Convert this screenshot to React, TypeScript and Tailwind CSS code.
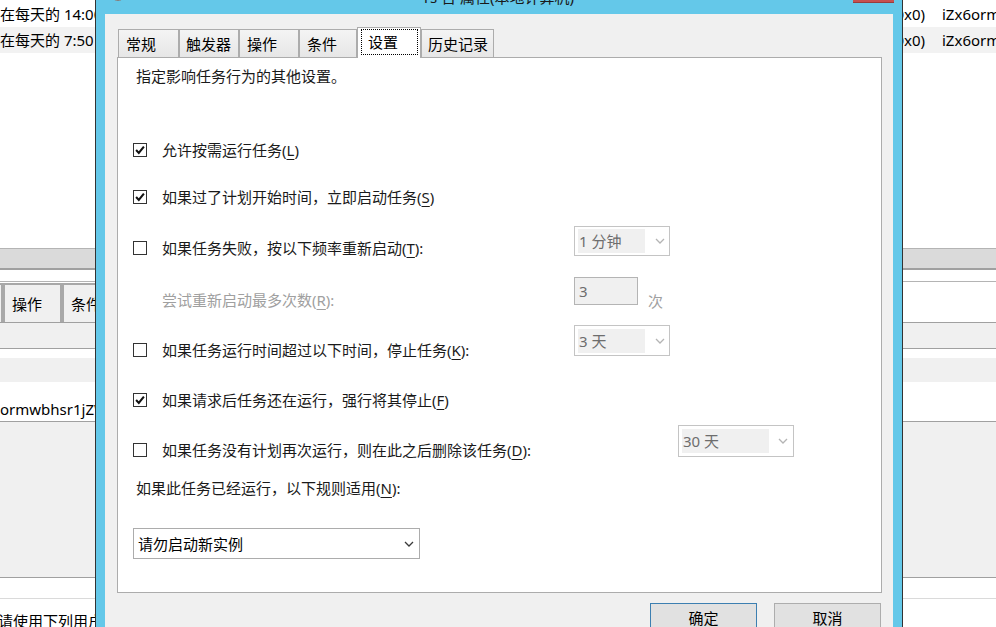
import React from "react";

const FONT = "font-['Noto_Sans','Noto_Sans_CJK_SC',sans-serif]";

function Chevron({ color }: { color: string }) {
  return (
    <svg width="10" height="6" viewBox="0 0 10 6" className="shrink-0">
      <path d="M1 1 L5 5 L9 1" fill="none" stroke={color} strokeWidth="1.3" />
    </svg>
  );
}

function Box({ checked }: { checked?: boolean }) {
  return (
    <span className="w-[14px] h-[14px] shrink-0 border border-[#333333] bg-white flex items-center justify-center">
      {checked && (
        <svg width="12" height="12" viewBox="0 0 12 12">
          <path d="M2.1 6.1 L4.8 8.9 L9.9 2.7" fill="none" stroke="#111" strokeWidth="2.1" />
        </svg>
      )}
    </span>
  );
}

function U({ k }: { k: string }) {
  return <span className="underline underline-offset-[3px] decoration-1">{k}</span>;
}

function CheckLine({ checked, children }: { checked?: boolean; children: React.ReactNode }) {
  return (
    <div className="flex items-center h-[20px]">
      <Box checked={checked} />
      <span className="ml-[15px] whitespace-nowrap text-[#1a1a1a]">{children}</span>
    </div>
  );
}

function DisabledCombo({
  text,
  outer,
  inner,
  gap,
}: {
  text: string;
  outer: string;
  inner: string;
  gap: string;
}) {
  return (
    <div className={`${outer} shrink-0 border border-[#c4c4c4] bg-white flex items-center pl-[3px]`}>
      <div className={`${inner} h-[24px] bg-[#f0f0f0] flex items-center pl-[1px] text-[#6d6d6d] whitespace-nowrap`}>
        {text}
      </div>
      <div className={gap}>
        <Chevron color="#b4b4b4" />
      </div>
    </div>
  );
}

function BackTab({ label, cls }: { label: string; cls: string }) {
  return (
    <div className={`${cls} h-[39px] shrink-0 border-2 border-b-0 border-[#a8a8a8] bg-[#f0f0f0] flex items-center pl-[7px] whitespace-nowrap`}>
      {label}
    </div>
  );
}

function Background() {
  return (
    <div className="w-[996px] flex flex-col bg-white text-[15px] leading-[20px] text-black">
      <div className="mt-[1px] h-[26px] shrink-0 flex items-center whitespace-nowrap">
        <span className="w-[880px] shrink-0">在每天的 14:00 时 - 触发后，无限期地每隔 1 小时重复一次</span>
        <span className="w-[45px] shrink-0 text-right">(0x0)</span>
        <span className="ml-[17px]">iZx6ormwbhsr1jZ</span>
      </div>
      <div className="h-[26px] shrink-0 flex items-center whitespace-nowrap bg-[#f2f2f2]">
        <span className="w-[880px] shrink-0">在每天的 7:50 时</span>
        <span className="w-[45px] shrink-0 text-right">(0x0)</span>
        <span className="ml-[17px]">iZx6ormwbhsr1jZ</span>
      </div>
      <div className="h-[195px] shrink-0" />
      <div className="h-[22px] shrink-0 border-t border-[#b4b4b4] border-b-2 border-b-[#a0a0a0] bg-[#dadada]" />
      <div className="h-[11px] shrink-0" />
      <div className="h-[41px] shrink-0 border-t border-[#b4b4b4] flex items-end bg-white">
        <div className="w-[3px] h-[39px] shrink-0 border-r-2 border-t-2 border-[#a8a8a8] bg-[#f0f0f0]" />
        <BackTab label="操作" cls="w-[59px]" />
        <BackTab label="条件" cls="w-[80px]" />
      </div>
      <div className="h-[27px] shrink-0 border-t border-b border-[#a0a0a0] bg-[#f0f0f0]" />
      <div className="h-[9px] shrink-0" />
      <div className="h-[24px] shrink-0 bg-[#f0f0f0]" />
      <div className="h-[39px] shrink-0 pt-[17px] whitespace-nowrap">ormwbhsr1jZWXYZ</div>
      <div className="h-[157px] shrink-0 border-t border-b border-[#a0a0a0] bg-[#f0f0f0]" />
      <div className="h-[21px] shrink-0 border-b border-[#dadada]" />
      <div className="shrink-0 pt-[12px] -ml-[2px] whitespace-nowrap">请使用下列用户帐户运行此任务</div>
    </div>
  );
}

function Tab({ label, cls, active }: { label: string; cls: string; active?: boolean }) {
  if (active) {
    return (
      <div className={`${cls} relative z-10 -mb-px h-[31px] border border-b-0 border-[#acacac] bg-white flex items-start pt-[1px] pl-[3px]`}>
        <span className="h-[26px] w-[57px] border border-dotted border-black flex items-center pl-[6px]">{label}</span>
      </div>
    );
  }
  return (
    <div
      className={`${cls} h-[28px] border border-b-0 border-[#acacac] bg-linear-to-b from-[#f4f4f4] to-[#e6e6e6] flex items-center whitespace-nowrap`}
    >
      {label}
    </div>
  );
}

function Dialog() {
  return (
    <div className="absolute left-[95px] top-[-30px] w-[808px] h-[700px] border border-[#333333] bg-[#64c8e9] px-[9px] flex flex-col">
      {/* caption */}
      <div className="relative h-[43px] shrink-0">
        <span className="absolute left-[5px] top-[14px] w-[16px] h-[16px] rounded-full border-[1.5px] border-[#7a7a7a] bg-[#e8e8e8]" />
        <div className="pt-[16px] text-center leading-[20px] text-[15px] text-[#1a1a1a] whitespace-nowrap">
          rs 台 属性(本地计算机)
        </div>
        <span className="absolute left-[748px] top-[10px] w-[41px] h-[22px] bg-[#c75050] border-b border-[#9a3c3c]" />
      </div>

      {/* body */}
      <div className="flex-1 bg-[#f0f0f0] pt-[13px] pl-[12px] pr-[11px] flex flex-col text-[15px] leading-[20px] text-black">
        <div className="h-[30px] flex items-end pl-[1px]">
          <Tab label="常规" cls="w-[61px] pl-[7px]" />
          <Tab label="触发器" cls="w-[60px] pl-[6px]" />
          <Tab label="操作" cls="w-[60px] pl-[7px]" />
          <Tab label="条件" cls="w-[58px] pl-[7px]" />
          <Tab label="设置" cls="w-[64px]" active />
          <Tab label="历史记录" cls="w-[73px] pl-[6px]" />
        </div>

        <div className="h-[536px] w-[765px] shrink-0 border border-[#acacac] bg-white pl-[15px] flex flex-col">
          <div className="mt-[8px] h-[20px] ml-[3px] whitespace-nowrap text-[#1a1a1a]">指定影响任务行为的其他设置。</div>

          <div className="mt-[54px]">
            <CheckLine checked>
              允许按需运行任务(<U k="L" />)
            </CheckLine>
          </div>

          <div className="mt-[27px]">
            <CheckLine checked>
              如果过了计划开始时间，立即启动任务(<U k="S" />)
            </CheckLine>
          </div>

          <div className="mt-[19px] h-[30px] flex">
            <div className="w-[441px] shrink-0 pt-[12px]">
              <CheckLine>
                如果任务失败，按以下频率重新启动(<U k="T" />):
              </CheckLine>
            </div>
            <DisabledCombo text="1 分钟" outer="w-[96px] h-[30px]" inner="w-[67px]" gap="ml-[10px]" />
          </div>

          <div className="mt-[21px] h-[28px] flex">
            <div className="w-[441px] shrink-0 pt-[13px] pl-[29px] text-[#a0a0a0] whitespace-nowrap">
              尝试重新启动最多次数(<U k="R" />):
            </div>
            <div className="w-[64px] h-[28px] shrink-0 border border-[#b4b4b4] bg-[#f0f0f0] pl-[4px] flex items-center text-[#6d6d6d]">
              3
            </div>
            <div className="ml-[10px] pt-[14px] text-[#a0a0a0]">次</div>
          </div>

          <div className="mt-[20px] h-[31px] flex">
            <div className="w-[441px] shrink-0 pt-[15px]">
              <CheckLine>
                如果任务运行时间超过以下时间，停止任务(<U k="K" />):
              </CheckLine>
            </div>
            <DisabledCombo text="3 天" outer="w-[96px] h-[31px]" inner="w-[67px]" gap="ml-[10px]" />
          </div>

          <div className="mt-[34px]">
            <CheckLine checked>
              如果请求后任务还在运行，强行将其停止(<U k="F" />)
            </CheckLine>
          </div>

          <div className="mt-[15px] h-[32px] flex">
            <div className="w-[545px] shrink-0 pt-[15px]">
              <CheckLine>
                如果任务没有计划再次运行，则在此之后删除该任务(<U k="D" />):
              </CheckLine>
            </div>
            <DisabledCombo text="30 天" outer="w-[116px] h-[32px]" inner="w-[87px]" gap="ml-[9px]" />
          </div>

          <div className="mt-[21px] h-[20px] ml-[3px] whitespace-nowrap text-[#1a1a1a]">
            如果此任务已经运行，以下规则适用(<U k="N" />):
          </div>

          <div className="mt-[30px] w-[287px] h-[31px] border border-[#acacac] bg-white flex items-center pl-[4px] pr-[5px]">
            <span className="flex-1 whitespace-nowrap">请勿启动新实例</span>
            <Chevron color="#3a3a3a" />
          </div>
        </div>

        <div className="mt-[10px] flex justify-end gap-[17px] mr-[1px]">
          <div className="w-[107px] h-[29px] border border-[#3c7fb1] bg-[#e1e1e1] flex items-center justify-center">确定</div>
          <div className="w-[107px] h-[29px] border border-[#adadad] bg-[#e1e1e1] flex items-center justify-center">取消</div>
        </div>
      </div>
    </div>
  );
}

export default function App() {
  return (
    <div className={`relative w-[996px] h-[627px] overflow-hidden bg-white ${FONT}`}>
      <Background />
      <Dialog />
    </div>
  );
}
